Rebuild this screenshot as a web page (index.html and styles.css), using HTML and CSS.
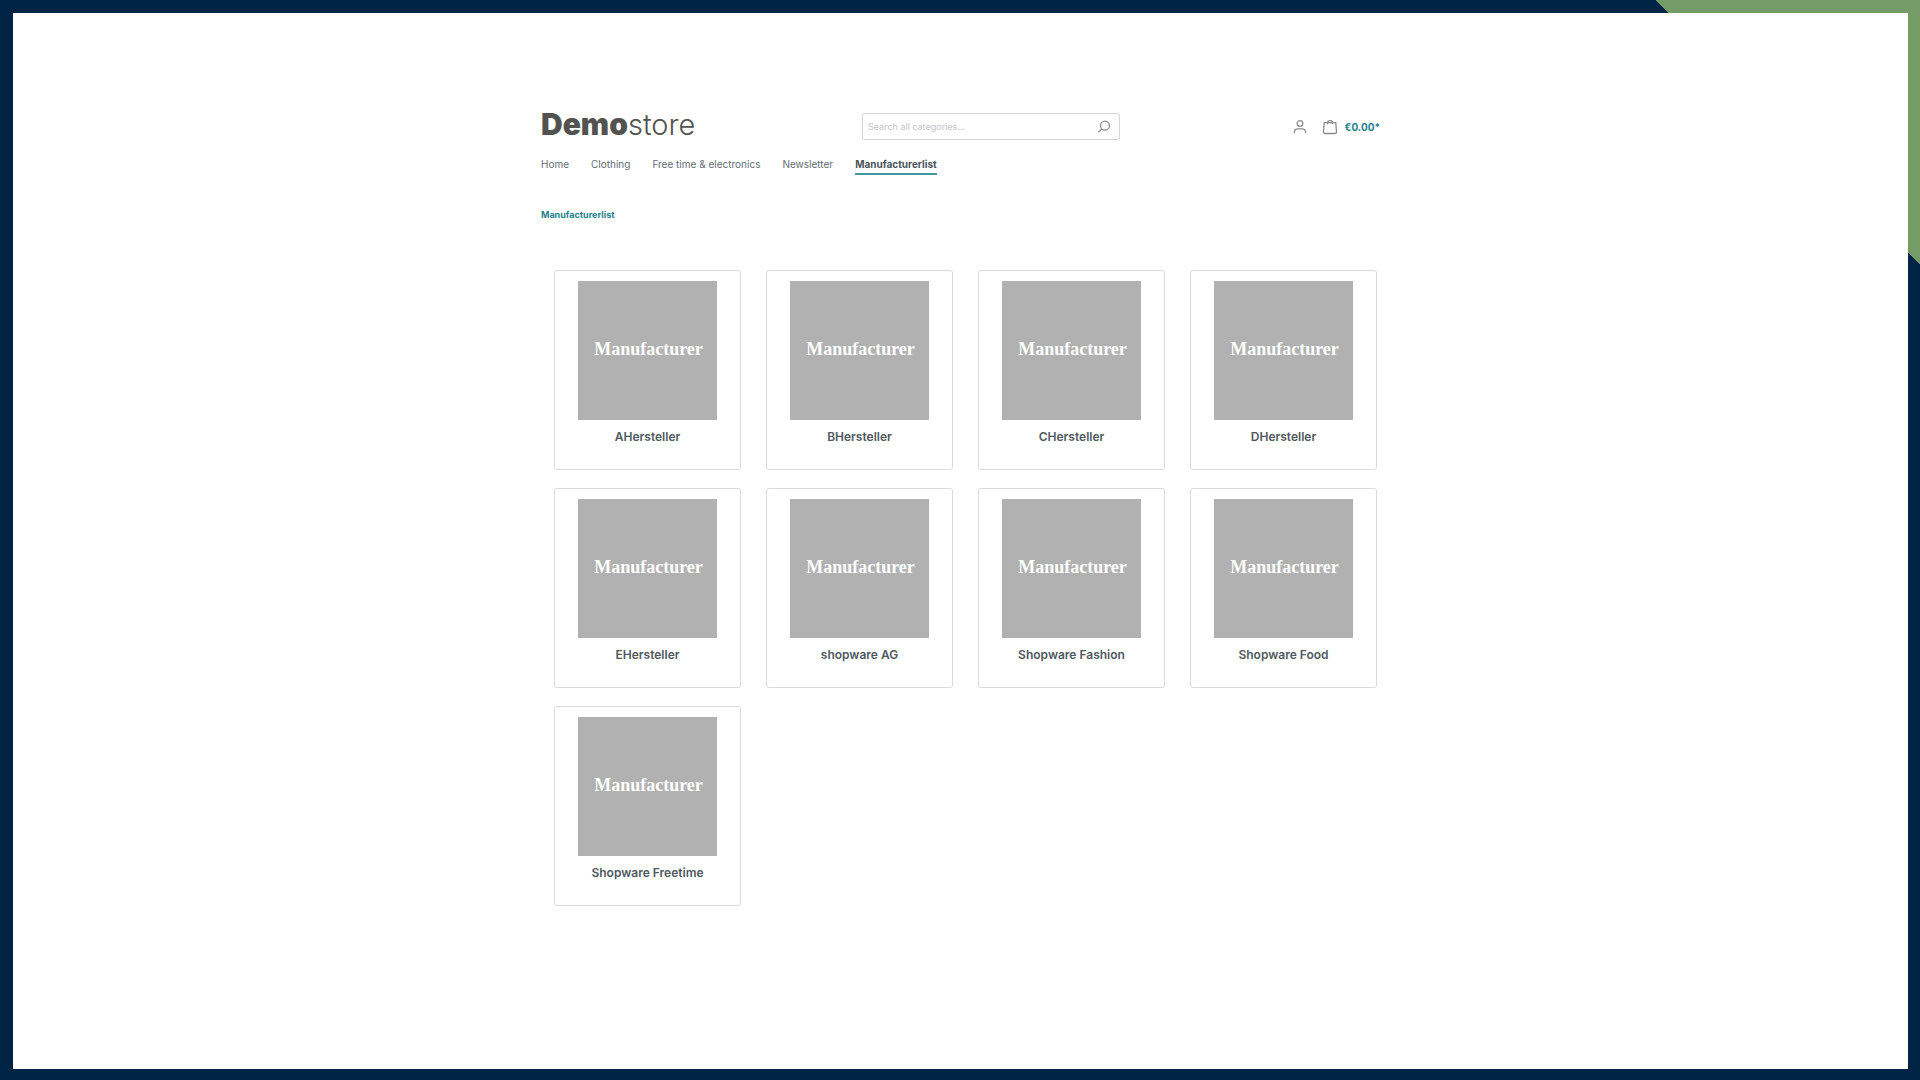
FILE: index.html
```html
<!DOCTYPE html>
<html lang="en">
<head>
<meta charset="utf-8">
<title>Manufacturerlist - Demostore</title>
<link rel="stylesheet" href="styles.css">
</head>
<body>
<div class="page">
  <div class="shop">
    <header class="header">
      <a class="logo" href="#"><strong>Demo</strong>store</a>
      <form class="search" role="search">
        <input class="search-input" type="search" aria-label="Search" placeholder="Search all categories...">
        <button class="search-button" type="button" aria-label="Search">
          <svg width="14" height="14" viewBox="0 0 14 14"><circle cx="8" cy="5.700" r="4.500"/><path d="M4.800 8.900 1.500 12.200"/></svg>
        </button>
      </form>
      <div class="actions">
        <button class="account" type="button" aria-label="Your account">
          <svg width="14" height="16" viewBox="0 0 14 16"><circle cx="7" cy="4.500" r="2.800"/><path d="M1.500 14.200v-1.400a3 3 0 0 1 3-3h5a3 3 0 0 1 3 3v1.400"/></svg>
        </button>
        <a class="cart" href="#" aria-label="Shopping cart, €0.00">
          <svg width="16" height="16" viewBox="0 0 16 16"><path d="M2.200 3.700h11.600l.7 9.300a1.400 1.400 0 0 1-1.400 1.500H2.900A1.400 1.400 0 0 1 1.500 13z"/><path d="M5.600 5.200V3.600a2.400 2 0 0 1 4.800 0v1.600"/></svg>
          <span>€0.00*</span>
        </a>
      </div>
    </header>
    <nav class="nav" aria-label="Main">
      <a href="#">Home</a>
      <a href="#">Clothing</a>
      <a href="#">Free time &amp; electronics</a>
      <a href="#">Newsletter</a>
      <a class="active" href="#" aria-current="page">Manufacturerlist</a>
    </nav>
    <nav class="breadcrumb" aria-label="Breadcrumb"><a href="#">Manufacturerlist</a></nav>
    <main class="grid">
      <a class="card" href="#"><span class="thumb">Manufacturer</span><span class="name">AHersteller</span></a>
      <a class="card" href="#"><span class="thumb">Manufacturer</span><span class="name">BHersteller</span></a>
      <a class="card" href="#"><span class="thumb">Manufacturer</span><span class="name">CHersteller</span></a>
      <a class="card" href="#"><span class="thumb">Manufacturer</span><span class="name">DHersteller</span></a>
      <a class="card" href="#"><span class="thumb">Manufacturer</span><span class="name">EHersteller</span></a>
      <a class="card" href="#"><span class="thumb">Manufacturer</span><span class="name">shopware AG</span></a>
      <a class="card" href="#"><span class="thumb">Manufacturer</span><span class="name">Shopware Fashion</span></a>
      <a class="card" href="#"><span class="thumb">Manufacturer</span><span class="name">Shopware Food</span></a>
      <a class="card" href="#"><span class="thumb">Manufacturer</span><span class="name">Shopware Freetime</span></a>
    </main>
  </div>
</div>
</body>
</html>
```
FILE: styles.css
```css
* { box-sizing: border-box; }

body {
  margin: 0;
  min-height: 100vh;
  display: flex;
  padding: 13px 12px 11px 13px;
  background: linear-gradient(to top right, transparent 50%, #759c66 50%) top right / 264px 264px no-repeat, #002445;
  font-family: Inter, "Liberation Sans", sans-serif;
  font-size: 10px;
  line-height: 16px;
  color: #4f595f;
}

a { color: inherit; text-decoration: none; }
button { padding: 0; border: 0; background: none; cursor: pointer; }
svg { display: block; fill: none; stroke: #8c8c8c; stroke-width: 1.3; }

.page { flex: 1; background: #fff; padding: 93px 16px 40px; }
.shop { max-width: 839px; margin: 0 auto; }

.header {
  display: grid;
  grid-template-columns: 1fr 258px 228px;
  align-items: center;
  column-gap: 32px;
}
.logo { font-size: 29px; line-height: 36px; font-weight: 300; color: #52534f; }
.logo strong { font-size: 30px; font-weight: 900; }

.search {
  display: flex;
  align-items: center;
  height: 27px;
  margin-top: 4px;
  padding: 0 8px 0 5px;
  border: 1px solid #d4d6d8;
  border-radius: 2px;
}
.search-input {
  flex: 1;
  min-width: 0;
  padding: 0;
  border: 0;
  outline: 0;
  background: none;
  font: inherit;
  font-size: 9px;
}
.search-input::placeholder { color: #c3c3c5; opacity: 1; }

.actions { display: flex; justify-content: flex-end; align-items: center; gap: 15px; padding-top: 4px; }
.cart { display: flex; align-items: center; gap: 7px; font-weight: 700; color: #26828c; }

.nav { display: flex; gap: 22px; margin-top: 13px; color: #646d73; }
.nav a { padding-bottom: 1px; border-bottom: 2px solid transparent; }
.nav .active { font-weight: 700; color: #4a545b; border-color: #4199a1; }

.breadcrumb { margin-top: 32px; font-size: 9px; font-weight: 700; color: #26828c; }

.grid {
  display: grid;
  grid-template-columns: repeat(4, 1fr);
  gap: 18px 25px;
  margin-top: 47px;
  padding: 0 3px 0 13px;
}
.card {
  display: flex;
  flex-direction: column;
  align-items: center;
  gap: 9px;
  padding: 10px 10px 24px;
  border: 1px solid #d8dadd;
  border-radius: 3px;
}
.thumb {
  display: grid;
  place-items: center;
  width: 139px;
  aspect-ratio: 1;
  padding: 0 0 2px 2px;
  background: #b1b1b1;
  font: bold 18px "Liberation Serif", serif;
  color: #fff;
}
.name { font-size: 12px; font-weight: 600; text-align: center; }

@media (max-width: 860px) {
  .header { grid-template-columns: 1fr auto; }
  .nav { flex-wrap: wrap; }
  .grid { grid-template-columns: repeat(auto-fill, minmax(170px, 1fr)); }
}
```
